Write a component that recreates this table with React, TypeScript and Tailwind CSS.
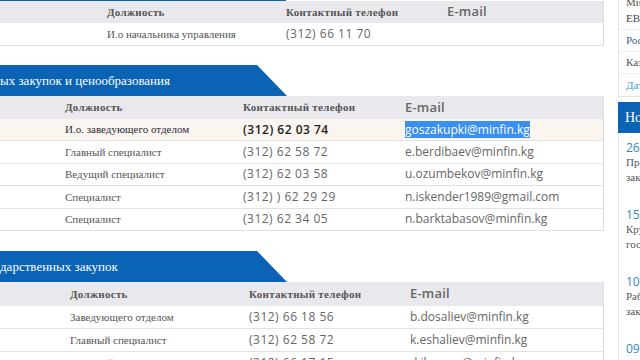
import React from 'react'

type Row = { pos: string; phone: string; email: string; active?: boolean }

const TABLE_1: Row[] = [
  { pos: 'И.о начальника управления', phone: '(312) 66 11 70', email: '' },
]

const TABLE_2: Row[] = [
  { pos: 'И.о. заведующего отделом', phone: '(312) 62 03 74', email: 'goszakupki@minfin.kg', active: true },
  { pos: 'Главный специалист', phone: '(312) 62 58 72', email: 'e.berdibaev@minfin.kg' },
  { pos: 'Ведущий специалист', phone: '(312) 62 03 58', email: 'u.ozumbekov@minfin.kg' },
  { pos: 'Специалист', phone: '(312) ) 62 29 29', email: 'n.iskender1989@gmail.com' },
  { pos: 'Специалист', phone: '(312) 62 34 05', email: 'n.barktabasov@minfin.kg' },
]

const TABLE_3: Row[] = [
  { pos: 'Заведующего отделом', phone: '(312) 66 18 56', email: 'b.dosaliev@minfin.kg' },
  { pos: 'Главный специалист', phone: '(312) 62 58 72', email: 'k.eshaliev@minfin.kg' },
  { pos: 'Ведущий специалист', phone: '(312) 66 17 15', email: 'd.ibraeva@minfin.kg' },
]

const NEWS = [
  { date: '26-05-2015', text: 'Презентация для поставщиков и закупающих организаций' },
  { date: '15-05-2015', text: 'Круглый стол по вопросам государственных закупок' },
  { date: '10-05-2015', text: 'Рабочая встреча по вопросам проекта закона' },
  { date: '09-05-2015', text: 'Семинар для закупающих организаций' },
]

const serif = "font-['Liberation_Serif',serif]"
const sans = "font-['Open_Sans',sans-serif]"

function Tab({ title }: { title: string }) {
  return (
    <div className="h-[31px] w-[287px] bg-[#0a63b5] [clip-path:polygon(0_0,257px_0,287px_100%,0_100%)] flex items-center">
      <span className={`${serif} text-[13px] text-white whitespace-nowrap`}>{title}</span>
    </div>
  )
}

function Table({ rows, lead, headH, rowH }: { rows: Row[]; lead: number; headH: string; rowH: string }) {
  const cols =
    lead === 107
      ? 'grid-cols-[107px_179px_161px_1fr]'
      : lead === 65
        ? 'grid-cols-[65px_178px_162px_1fr]'
        : 'grid-cols-[70px_179px_161px_1fr]'
  return (
    <div className="w-[604px] border-r border-[#dcdcdc]">
      <div className={`grid ${cols} ${headH} items-center bg-[#e9e9ed]`}>
        <div />
        <div className={`${serif} font-bold text-[11px] text-[#555] tracking-[0.3px]`}>Должность</div>
        <div className={`${serif} font-bold text-[11px] text-[#555] tracking-[0.3px]`}>Контактный телефон</div>
        <div className={`${sans} font-semibold text-[13px] text-[#666] tracking-[0.2px]`}>E-mail</div>
      </div>
      {rows.map((r, i) => (
        <div
          key={i}
          className={`grid ${cols} ${rowH} items-center border-b border-[#e2e2e2] ${r.active ? 'bg-[#faf5ee]' : 'bg-white'}`}
        >
          <div />
          <div className={`${serif} text-[11px] whitespace-nowrap ${r.active ? 'text-[#2a2a3a]' : 'text-[#555]'}`}>{r.pos}</div>
          <div className={`${sans} text-[12px] tracking-[0.5px] whitespace-nowrap ${r.active ? 'text-[#222] font-semibold' : 'text-[#666]'}`}>
            {r.phone}
          </div>
          <div className={`${sans} text-[12px] whitespace-nowrap text-[#666]`}>
            {r.active ? <span className="bg-[#3a8ff0] text-white">{r.email}</span> : r.email}
          </div>
        </div>
      ))}
    </div>
  )
}

export default function App() {
  return (
    <div className="w-[640px] h-[360px] overflow-hidden bg-white flex items-start">
      <main className="w-[604px] shrink-0">
        <div className="h-[1px] w-[286px] bg-[#0a63b5]" />
        <Table rows={TABLE_1} lead={107} headH="h-[22px]" rowH="h-[23px]" />
        <div className="h-[19px]" />
        <Tab title="ых закупок и ценообразования" />
        <Table rows={TABLE_2} lead={65} headH="h-[23px]" rowH="h-[22.4px]" />
        <div className="h-[20px]" />
        <Tab title="дарственных закупок" />
        <Table rows={TABLE_3} lead={70} headH="h-[24px]" rowH="h-[23px]" />
      </main>

      <aside className="ml-[14px] w-[200px] shrink-0">
        <div className={`${serif} text-[11px] border-l border-b border-[#e3e3e3] h-[97px]`}>
          <div className="h-[8px] text-[#555] leading-[4px] pl-[7px] overflow-hidden">Минфин</div>
          <div className="h-[22px] flex items-center pl-[7px] text-[#444] border-b border-[#efefef]">ЕВРАЗЭС</div>
          <div className="h-[22px] flex items-center pl-[7px] text-[#3a5f84] border-b border-[#efefef]">Россия</div>
          <div className="h-[22px] flex items-center pl-[7px] text-[#555] border-b border-[#efefef]">Казахстан</div>
          <div className="h-[22px] flex items-center pl-[7px] text-[#3aa0d8]">Дата обновления</div>
        </div>
        <div className="h-[5px]" />
        <div className={`h-[31px] bg-[#0a63b5] flex items-center pl-[7px] ${serif} text-[14px] text-white`}>Новости</div>
        <div className="border-l border-[#e3e3e3] h-[240px] pl-[7px] pt-[7px]">
          {NEWS.map((n) => (
            <div key={n.date} className="h-[67px]">
              <div className={`${sans} text-[12px] text-[#2b8cc4] leading-[15px]`}>{n.date}</div>
              <div className={`${serif} text-[11px] text-[#555] leading-[15px] w-[180px]`}>{n.text}</div>
            </div>
          ))}
        </div>
      </aside>
    </div>
  )
}
